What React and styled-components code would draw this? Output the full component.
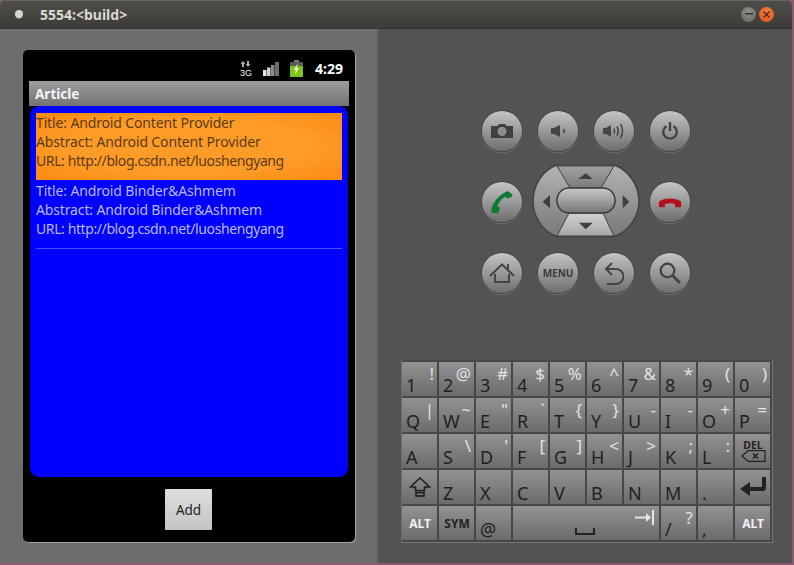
import React from 'react';
import styled, { createGlobalStyle } from 'styled-components';

const Global = createGlobalStyle`
  html, body {
    margin: 0;
    padding: 0;
    width: 794px;
    height: 565px;
    overflow: hidden;
    background: #8a5a70;
  }
  * { box-sizing: border-box; }
`;

const Window = styled.div`
  width: 792px;
  height: 563px;
  border-radius: 6px 6px 0 0;
  overflow: hidden;
  display: flex;
  flex-direction: column;
  font-family: 'Noto Sans', 'Open Sans', sans-serif;
  background: #535353;
`;

const TitleBar = styled.div`
  height: 29px;
  flex: none;
  display: flex;
  align-items: center;
  padding: 0 15px 1px 15px;
  background: linear-gradient(#4f4d49, #3d3b37);
  border-top: 1px solid #67655f;
  border-bottom: 1px solid #35332f;
`;

const TitleDot = styled.span`
  width: 8px;
  height: 8px;
  border-radius: 50%;
  background: #d8d7d3;
  box-shadow: 0 2px 0 -1px #88867f;
`;

const TitleText = styled.span`
  margin-left: 17px;
  color: #d9d8d3;
  font-size: 14px;
  font-weight: 700;
`;

const WindowButtons = styled.div`
  margin-left: auto;
  display: flex;
  gap: 3px;
  padding-right: 3px;
`;

const WindowButton = styled.span`
  width: 15px;
  height: 15px;
  border-radius: 50%;
  display: flex;
  align-items: center;
  justify-content: center;
  background: ${({ $close }) =>
    $close
      ? 'radial-gradient(circle at 50% 30%, #f47a3e, #dc5416)'
      : 'radial-gradient(circle at 50% 30%, #8f8e88, #666560)'};
`;

const Body = styled.div`
  flex: 1;
  display: flex;
  min-height: 0;
`;

const SkinLeft = styled.div`
  width: 379px;
  flex: none;
  padding: 21px 0 0 23px;
  background: #6d6d6d;
  border-right: 2px solid #5d5d5d;
`;

const Screen = styled.div`
  width: 332px;
  height: 492px;
  display: flex;
  flex-direction: column;
  align-items: center;
  padding: 0 6px;
  background: #000;
  border-radius: 5px;
  box-shadow: 1px 1px 0 #a2a2a2;
`;

const StatusBar = styled.div`
  width: 100%;
  height: 31px;
  flex: none;
  display: flex;
  align-items: center;
  justify-content: flex-end;
  padding: 6px 6px 0 0;
`;

const StatusTime = styled.span`
  margin-left: 12px;
  color: #fff;
  font-size: 14px;
  font-weight: 700;
`;

const ActionBar = styled.div`
  width: 100%;
  height: 25px;
  flex: none;
  display: flex;
  align-items: center;
  padding: 0 6px;
  color: #f4f4f4;
  font-size: 13.5px;
  font-weight: 700;
  background: linear-gradient(#9e9c9e, #747274);
`;

const List = styled.div`
  width: 318px;
  height: 371px;
  flex: none;
  padding: 7px 6px 0;
  background: #0000ff;
  border-radius: 9px;
`;

const Row = styled.div`
  height: ${({ $selected }) => ($selected ? '67px' : '69px')};
  padding-top: ${({ $selected }) => ($selected ? '0' : '1px')};
  display: flex;
  flex-direction: column;
  font-size: 14px;
  line-height: 19px;
  color: ${({ $selected }) => ($selected ? '#5c3a10' : '#b9b9ff')};
  background: ${({ $selected }) =>
    $selected
      ? 'radial-gradient(ellipse at center, #ff9c28 55%, #fb8a12 100%)'
      : 'transparent'};
  border-bottom: ${({ $selected }) =>
    $selected ? 'none' : '1px solid #4a4aff'};
`;

const RowLine = styled.span`
  white-space: nowrap;
  letter-spacing: ${({ $tight }) => ($tight ? '-0.4px' : '-0.14px')};
`;

const AddButton = styled.button`
  width: 47px;
  height: 41px;
  margin: 12px 1px 0 0;
  padding: 0;
  border: none;
  border-radius: 1px;
  font-family: inherit;
  font-size: 13.5px;
  color: #222;
  background: linear-gradient(#dedede, #c4c4c4);
`;

const SkinRight = styled.div`
  flex: 1;
  display: flex;
  flex-direction: column;
  align-items: flex-start;
  min-width: 0;
`;

const ButtonGrid = styled.div`
  margin: 82px 0 0 103px;
  display: grid;
  grid-template-columns: repeat(4, 40px);
  grid-auto-rows: 40px;
  column-gap: 16px;
  row-gap: 31px;
`;

const RoundButton = styled.div`
  width: 40px;
  height: 40px;
  border-radius: 50%;
  display: flex;
  align-items: center;
  justify-content: center;
  background: linear-gradient(#c4c4c4, #6e6e6e);
  box-shadow: 0 0 0 1px #424242, 0 1px 0 1px #6e6e6e;
`;

const MenuLabel = styled.span`
  font-size: 10px;
  font-weight: 700;
  color: #3a3a3a;
`;

const DpadCell = styled.div`
  grid-column: span 2;
  display: flex;
  justify-content: center;
  align-items: center;
  height: 40px;
`;

const Keyboard = styled.div`
  margin: 67px 0 0 22px;
  width: 372px;
  padding: 2px 2px 2px 0;
  display: grid;
  grid-template-columns: repeat(10, 35px);
  grid-auto-rows: 34px;
  gap: 2px;
  border-left: 1px solid #6b6b6b;
  border-right: 1px solid #777;
  border-bottom: 1px solid #777;
  background: #474747;
`;

const Key = styled.div`
  grid-column: span ${({ $span }) => $span || 1};
  display: flex;
  justify-content: space-between;
  padding: 0 3px 0 4px;
  overflow: hidden;
  background: linear-gradient(#929292, #6b6b6b);
`;

const KeyMain = styled.span`
  align-self: flex-end;
  font-size: 18px;
  line-height: 21px;
  color: #1f1f1f;
`;

const KeyAlt = styled.span`
  align-self: flex-start;
  padding-top: 1px;
  font-size: 17px;
  line-height: 21px;
  color: #e2e2e2;
`;

const KeyLabel = styled.span`
  margin: auto;
  font-size: ${({ $small }) => ($small ? '10.5px' : '12px')};
  line-height: ${({ $small }) => ($small ? '10px' : 'normal')};
  font-weight: 700;
  color: ${({ $light }) => ($light ? '#f0f0f0' : '#222')};
`;

const KeyIcon = styled.span`
  margin: auto;
  display: flex;
  flex-direction: column;
  align-items: center;
`;

const SpaceBar = styled.span`
  align-self: flex-end;
  margin: 0 0 5px 58px;
`;

const TabMark = styled.span`
  align-self: flex-start;
  margin: 4px 2px 0 auto;
`;

const Camera = () => (
  <svg width="22" height="14" viewBox="0 0 22 14" fill="#404040">
    <path fillRule="evenodd" d="M0 2h6.500L8 0h6l1.500 2H22v12H0zM11 3a4.500 4.500 0 1 0 0 9 4.500 4.500 0 0 0 0-9z" />
    <circle cx="11" cy="7.500" r="3.500" fill="#8c8c8c" />
  </svg>
);

const SpeakerLow = () => (
  <svg width="15" height="12" viewBox="0 0 15 12">
    <path d="M0 3h3l6-3v12L3 9H0z" fill="#454545" />
    <path d="M12.500 4c.8 1.200.8 2.800 0 4" stroke="#454545" strokeWidth="1.500" fill="none" />
  </svg>
);

const SpeakerHigh = () => (
  <svg width="22" height="16" viewBox="0 0 22 16">
    <path d="M0 5h3l5-3v12L3 11H0z" fill="#454545" />
    <g stroke="#3c3c3c" strokeWidth="1.400" fill="none">
      <path d="M11 5.500c.8 1.600.8 3.400 0 5" />
      <path d="M14 3.500c1.600 3 1.600 6 0 9" />
      <path d="M17.500 1c2.600 4.400 2.600 9.600 0 14" />
    </g>
  </svg>
);

const Power = () => (
  <svg width="16" height="18" viewBox="0 0 16 18" fill="none" stroke="#444" strokeWidth="2.400">
    <path d="M8 0v9" />
    <path d="M4.500 4a6.800 6.800 0 1 0 7 0" />
  </svg>
);

const CallGreen = () => (
  <svg width="24" height="24" viewBox="0 0 24 26">
    <path
      d="M2 25c-1.500-1-2-2-1.500-4C2 13 9 5 17 1.500c1-.5 2 0 2.500.5l3.500 3c.5 1 .2 2-1 2.500l-3.500 1.500c-1 .3-1.500 0-2-.5l-1-1.300C11 10 8 14 7 17.500l1.700.8c.8.5 1 1 .8 2l-1 3.500c-.4 1.200-1.300 1.700-2.500 1.400z"
      fill="#0f7a33"
    />
  </svg>
);

const CallRed = () => (
  <svg width="28" height="12" viewBox="0 0 28 14">
    <path
      d="M1 12V8c0-1 .5-2 1.500-2.500C9 2 19 2 25.500 5.500 26.500 6 27 7 27 8v4c0 .8-.5 1.200-1.300 1.200h-4.500c-.8 0-1.200-.5-1.200-1.200V9.500c-3.500-1.200-8.500-1.200-12 0V12c0 .7-.4 1.200-1.200 1.200H2.300C1.500 13.200 1 12.800 1 12z"
      fill="#b3101c"
    />
  </svg>
);

const Home = () => (
  <svg width="26" height="20" viewBox="0 0 26 20" fill="none" stroke="#444" strokeWidth="2">
    <path d="M1 13L13 1.500 25 13" />
    <path d="M6 11v8h14v-8" />
    <path d="M19 7V1" />
  </svg>
);

const Back = () => (
  <svg width="20" height="23" viewBox="0 0 20 23" fill="none" stroke="#444" strokeWidth="2">
    <path d="M8 1L2 7l6 6" />
    <path d="M2 7h10a6.500 6.500 0 0 1 0 15H3" />
  </svg>
);

const Search = () => (
  <svg width="22" height="22" viewBox="0 0 22 22" fill="none" stroke="#444">
    <circle cx="8.500" cy="8.500" r="6.800" strokeWidth="2.300" />
    <path d="M13.500 13.500L21 21" strokeWidth="3" />
  </svg>
);

const Dpad = () => (
  <svg width="108" height="76" viewBox="0 0 108 76" style={{ flex: 'none' }}>
    <defs>
      <linearGradient id="side" x1="0" y1="0" x2="0" y2="1">
        <stop offset="0" stopColor="#b4b4b4" />
        <stop offset="1" stopColor="#787878" />
      </linearGradient>
      <linearGradient id="up" x1="0" y1="0" x2="0" y2="1">
        <stop offset="0" stopColor="#a0a0a0" />
        <stop offset="1" stopColor="#7d7d7d" />
      </linearGradient>
      <linearGradient id="down" x1="0" y1="0" x2="0" y2="1">
        <stop offset="0" stopColor="#d2d2d2" />
        <stop offset="1" stopColor="#a6a6a6" />
      </linearGradient>
      <linearGradient id="pill" x1="0" y1="0" x2="0" y2="1">
        <stop offset="0" stopColor="#c9c9c9" />
        <stop offset="1" stopColor="#767676" />
      </linearGradient>
    </defs>
    <path
      d="M25 1H82C97 6 107 22 107 37C107 52 97 68 82 72.500H25C10 68 1 52 1 37C1 22 10 6 25 1Z"
      fill="url(#side)"
      stroke="#414141"
      strokeWidth="1.500"
    />
    <path d="M25 2H82L69 24H38Z" fill="url(#up)" stroke="#414141" />
    <path d="M37 49H71L82 72H25Z" fill="url(#down)" stroke="#414141" />
    <rect x="25" y="24" width="58" height="25" rx="12" fill="url(#pill)" stroke="#3a3a3a" strokeWidth="1.500" />
    <path d="M53.700 9.300L46.300 15H60.700Z" fill="#3f3f3f" />
    <path d="M47 58.700H60.700L53.700 65.300Z" fill="#3f3f3f" />
    <path d="M18 31V44.300L10.700 37.700Z" fill="#3f3f3f" />
    <path d="M90.700 31V44.300L97.300 37.700Z" fill="#3f3f3f" />
  </svg>
);

const Network = () => (
  <svg width="12" height="16" viewBox="0 0 12 16">
    <path d="M3 0l2.500 3H4v3H2V3H.5zM8 6L5.500 3H7V0h2v3h1.500z" fill="#aaa" />
    <text x="0" y="15" fontFamily="'Liberation Sans', sans-serif" fontSize="9" fill="#eee">3G</text>
  </svg>
);

const Signal = () => (
  <svg width="16" height="14" viewBox="0 0 16 14" style={{ marginLeft: 11 }}>
    <rect x="0" y="8" width="3.500" height="6" fill="#e6e6e6" />
    <rect x="4" y="5.500" width="3.500" height="8.500" fill="#d0d0d0" />
    <rect x="8" y="3" width="3.500" height="11" fill="#8a8a8a" />
    <rect x="12" y="0" width="4" height="14" fill="#6e6e6e" />
  </svg>
);

const Battery = () => (
  <svg width="13" height="17" viewBox="0 0 13 17" style={{ marginLeft: 11 }}>
    <rect x="4" y="0" width="5" height="2" fill="#777" />
    <rect x="0" y="2" width="13" height="15" rx="1" fill="#5c5c5c" />
    <rect x="0" y="6" width="13" height="11" rx="1" fill="#7fc31c" />
    <path d="M7.500 3.500L4 10h2L5 14.500 9 8H7z" fill="#f4ffd0" />
  </svg>
);

const Shift = () => (
  <svg width="22" height="20" viewBox="0 0 22 20" fill="none" stroke="#222" strokeWidth="1.700">
    <path d="M11 1L1.500 10h5v3.500h9V10h5z" />
    <rect x="7" y="15.500" width="8" height="3.500" />
  </svg>
);

const Del = () => (
  <>
    <KeyLabel $small>DEL</KeyLabel>
    <svg width="25" height="12" viewBox="0 0 25 12" fill="none" stroke="#222" strokeWidth="1.200">
      <path d="M7 .7H24V11.300H7L1 6z" />
      <path d="M12 3.500l5 5M17 3.500l-5 5" strokeWidth="1.700" />
    </svg>
  </>
);

const Enter = () => (
  <svg width="26" height="20" viewBox="0 0 26 20" fill="#222">
    <path d="M22 0h4v11c0 2-1 3-3 3H10v5L0 12 10 5v5h12z" />
  </svg>
);

const SpaceKey = () => (
  <>
    <SpaceBar>
      <svg width="20" height="7" viewBox="0 0 20 7" fill="#222" style={{ display: 'block' }}>
        <path d="M0 0h2v5h16V0h2v7H0z" />
      </svg>
    </SpaceBar>
    <TabMark>
      <svg width="19" height="15" viewBox="0 0 19 15" fill="#e6e6e6" style={{ display: 'block' }}>
        <path d="M0 6.500h11V3l5 4.500-5 4.500V8.500H0zM17 0h2v15h-2z" />
      </svg>
    </TabMark>
  </>
);

const rows = [
  [['1', '!'], ['2', '@'], ['3', '#'], ['4', '$'], ['5', '%'], ['6', '^'], ['7', '&'], ['8', '*'], ['9', '('], ['0', ')']],
  [['Q', '|'], ['W', '~'], ['E', '"'], ['R', '`'], ['T', '{'], ['Y', '}'], ['U', '-'], ['I', '-'], ['O', '+'], ['P', '=']],
  [['A', ''], ['S', '\\'], ['D', "'"], ['F', '['], ['G', ']'], ['H', '<'], ['J', '>'], ['K', ';'], ['L', ':']],
];

const articles = [
  { title: 'Android Content Provider', selected: true },
  { title: 'Android Binder&Ashmem', selected: false },
];

const App = () => (
  <>
    <Global />
    <Window>
      <TitleBar>
        <TitleDot />
        <TitleText>5554:&lt;build&gt;</TitleText>
        <WindowButtons>
          <WindowButton>
            <svg width="8" height="2" viewBox="0 0 8 2"><rect width="8" height="1.500" fill="#33322f" /></svg>
          </WindowButton>
          <WindowButton $close>
            <svg width="7" height="7" viewBox="0 0 7 7" stroke="#4a2110" strokeWidth="1.200"><path d="M.5.5l6 6M6.500.5l-6 6" /></svg>
          </WindowButton>
        </WindowButtons>
      </TitleBar>
      <Body>
        <SkinLeft>
          <Screen>
            <StatusBar>
              <Network />
              <Signal />
              <Battery />
              <StatusTime>4:29</StatusTime>
            </StatusBar>
            <ActionBar>Article</ActionBar>
            <List>
              {articles.map((a) => (
                <Row key={a.title} $selected={a.selected}>
                  <RowLine>Title: {a.title}</RowLine>
                  <RowLine>Abstract: {a.title}</RowLine>
                  <RowLine $tight>URL: http://blog.csdn.net/luoshengyang</RowLine>
                </Row>
              ))}
            </List>
            <AddButton>Add</AddButton>
          </Screen>
        </SkinLeft>
        <SkinRight>
          <ButtonGrid>
            <RoundButton><Camera /></RoundButton>
            <RoundButton><SpeakerLow /></RoundButton>
            <RoundButton><SpeakerHigh /></RoundButton>
            <RoundButton><Power /></RoundButton>
            <RoundButton><CallGreen /></RoundButton>
            <DpadCell><Dpad /></DpadCell>
            <RoundButton><CallRed /></RoundButton>
            <RoundButton><Home /></RoundButton>
            <RoundButton><MenuLabel>MENU</MenuLabel></RoundButton>
            <RoundButton><Back /></RoundButton>
            <RoundButton><Search /></RoundButton>
          </ButtonGrid>
          <Keyboard>
            {rows.map((row) =>
              row.map(([main, alt]) => (
                <Key key={main}>
                  <KeyMain>{main}</KeyMain>
                  <KeyAlt>{alt}</KeyAlt>
                </Key>
              ))
            )}
            <Key><KeyIcon><Del /></KeyIcon></Key>
            <Key><KeyIcon><Shift /></KeyIcon></Key>
            {['Z', 'X', 'C', 'V', 'B', 'N', 'M', '.'].map((k) => (
              <Key key={k}><KeyMain>{k}</KeyMain></Key>
            ))}
            <Key><KeyIcon><Enter /></KeyIcon></Key>
            <Key><KeyLabel $light>ALT</KeyLabel></Key>
            <Key><KeyLabel>SYM</KeyLabel></Key>
            <Key><KeyMain>@</KeyMain></Key>
            <Key $span={4}><SpaceKey /></Key>
            <Key><KeyMain>/</KeyMain><KeyAlt>?</KeyAlt></Key>
            <Key><KeyMain>,</KeyMain></Key>
            <Key><KeyLabel $light>ALT</KeyLabel></Key>
          </Keyboard>
        </SkinRight>
      </Body>
    </Window>
  </>
);

export default App;
